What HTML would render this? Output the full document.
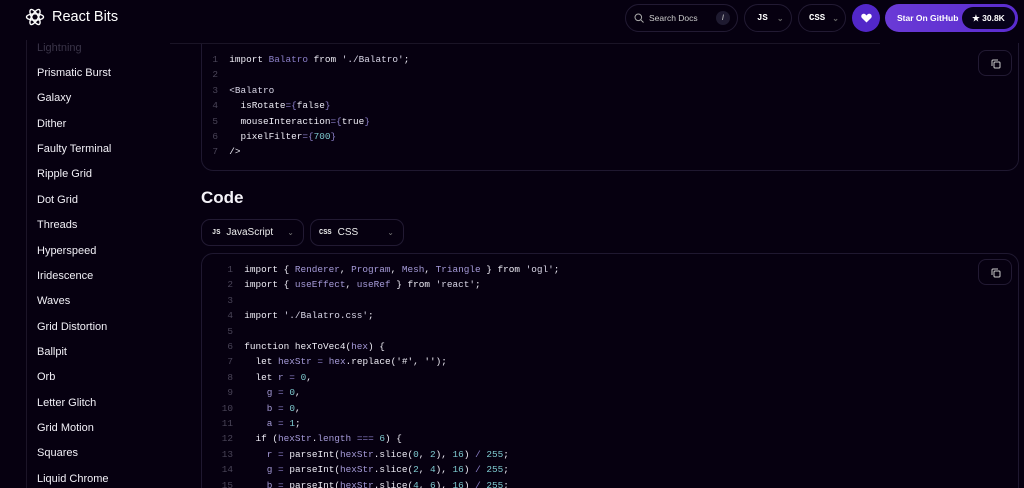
<!DOCTYPE html>
<html><head><meta charset="utf-8"><style>
*{margin:0;padding:0;box-sizing:border-box}
html,body{width:1024px;height:488px;overflow:hidden}
body{background:#060010;font-family:"Liberation Sans",sans-serif;color:#fff;position:relative}
.abs{position:absolute}
.side{left:26px;top:40px;width:140px;height:448px;border-left:1px solid #1c1528;overflow:hidden}
.side div{position:absolute;left:10px;font-size:11px;color:#f2f0f7;white-space:nowrap}
.pill{position:absolute;border:1px solid #221a33;border-radius:14px;height:28px;top:4px;display:flex;align-items:center;font-size:9px;font-weight:bold}
.block{border:1px solid #1f1830;border-radius:12px;background:#060010}
.code{font-family:"Liberation Mono",monospace;font-size:9.4px;line-height:15.4px;white-space:pre;color:#eeecf5;overflow:hidden}
.ln{color:#4a4458;display:inline-block;text-align:right}
.v{color:#a59ad8}.n{color:#7ecad0}.o{color:#8b7fc8}.c{color:#d8d5e6}
.copy{position:absolute;width:34px;height:26px;border:1px solid #221a33;border-radius:8px}
.dd{position:absolute;top:219px;height:27px;border:1px solid #221a33;border-radius:9px;font-size:10px;display:flex;align-items:center;color:#eee}
</style></head><body>
<div class="abs block" style="left:201px;top:20px;width:818px;height:151px"></div>
<div class="abs code" style="left:207px;top:52px"><span class="ln" style="width:11px">1</span>  import <span class="o">Balatro</span> from <span class="c">'./Balatro'</span>;
<span class="ln" style="width:11px">2</span>
<span class="ln" style="width:11px">3</span>  <span class="c">&lt;Balatro</span>
<span class="ln" style="width:11px">4</span>    isRotate<span class="o">={</span>false<span class="o">}</span>
<span class="ln" style="width:11px">5</span>    mouseInteraction<span class="o">={</span>true<span class="o">}</span>
<span class="ln" style="width:11px">6</span>    pixelFilter<span class="o">={</span><span class="n">700</span><span class="o">}</span>
<span class="ln" style="width:11px">7</span>  /&gt;</div>
<div class="copy" style="left:978px;top:50px"><svg class="abs" style="left:12px;top:8px" width="10" height="10" viewBox="0 0 10 10" fill="none" stroke="#ccc" stroke-width="1"><rect x="3" y="3" width="6" height="6" rx="1"/><path d="M1 7V2a1 1 0 0 1 1-1h5"/></svg></div>
<div class="abs" style="left:0;top:0;width:1024px;height:43px;background:#060010"></div>
<svg class="abs" style="left:25px;top:7px" width="20" height="20" viewBox="0 0 20 20" fill="none" stroke="#fff" stroke-width="1.4"><ellipse cx="10" cy="10" rx="8.5" ry="3.2"/><ellipse cx="10" cy="10" rx="8.5" ry="3.2" transform="rotate(60 10 10)"/><ellipse cx="10" cy="10" rx="8.5" ry="3.2" transform="rotate(120 10 10)"/></svg>
<div class="abs" style="left:52px;top:9px;font-size:14.5px;color:#fff">React Bits</div>
<div class="abs" style="left:170px;top:43px;width:710px;height:1px;background:#1a1426"></div>
<div class="pill" style="left:625px;width:113px;border-radius:14px"><svg style="margin-left:8px" width="10" height="10" viewBox="0 0 10 10" fill="none" stroke="#aaa" stroke-width="1"><circle cx="4.3" cy="4.3" r="3.3"/><path d="M6.8 6.8 9.5 9.5"/></svg><span style="margin-left:5px;font-weight:normal;color:#ccc;font-size:8.5px">Search Docs</span><span style="margin-left:auto;margin-right:7px;width:14px;height:14px;border-radius:7px;background:#1e1a30;font-size:7px;color:#bbb;display:flex;align-items:center;justify-content:center">/</span></div>
<div class="pill" style="left:744px;width:48px"><span style="margin-left:12px;font-family:'Liberation Mono',monospace">JS</span><span style="margin-left:9px;color:#666;font-size:8px">⌄</span></div>
<div class="pill" style="left:798px;width:48px"><span style="margin-left:10px;font-family:'Liberation Mono',monospace">CSS</span><span style="margin-left:7px;color:#666;font-size:8px">⌄</span></div>
<div class="abs" style="left:852px;top:4px;width:28px;height:28px;border-radius:14px;background:#5227c9;display:flex;align-items:center;justify-content:center"><svg width="11" height="10" viewBox="0 0 12 11"><path d="M6 10.5 1 5.5C-.5 4 .3 .8 3 .8 4.5.8 5.5 2 6 2.7 6.5 2 7.5.8 9 .8c2.7 0 3.5 3.2 2 4.7z" fill="#fff"/></svg></div>
<div class="abs" style="left:885px;top:4px;width:133px;height:28px;border-radius:14px;background:linear-gradient(90deg,#6a3ad6,#5a2ccf)"><span class="abs" style="left:12px;top:9px;font-size:8.5px;font-weight:bold">Star On GitHub</span><div class="abs" style="left:77px;top:3px;width:53px;height:22px;border-radius:11px;background:#07021a;font-size:8.5px;font-weight:bold;display:flex;align-items:center;justify-content:center">★ 30.8K</div></div>
<div class="abs side">
<div style="top:2px;color:#3a3448">Lightning</div>
<div style="top:27px">Prismatic Burst</div><div style="top:52px">Galaxy</div><div style="top:78px">Dither</div><div style="top:103px">Faulty Terminal</div><div style="top:128px">Ripple Grid</div><div style="top:154px">Dot Grid</div><div style="top:179px">Threads</div><div style="top:205px">Hyperspeed</div><div style="top:230px">Iridescence</div><div style="top:255px">Waves</div><div style="top:281px">Grid Distortion</div><div style="top:306px">Ballpit</div><div style="top:331px">Orb</div><div style="top:357px">Letter Glitch</div><div style="top:382px">Grid Motion</div><div style="top:407px">Squares</div><div style="top:433px">Liquid Chrome</div>
</div>
<div class="abs" style="left:201px;top:188px;font-size:17px;font-weight:bold;color:#f4f2f8">Code</div>
<div class="dd" style="left:201px;width:103px"><span style="margin-left:10px;font-family:'Liberation Mono',monospace;font-size:7px;font-weight:bold">JS</span><span style="margin-left:6px">JavaScript</span><span style="margin-left:auto;margin-right:9px;color:#777;font-size:8px">⌄</span></div>
<div class="dd" style="left:310px;width:94px"><span style="margin-left:8px;font-family:'Liberation Mono',monospace;font-size:7px;font-weight:bold">CSS</span><span style="margin-left:6px">CSS</span><span style="margin-left:auto;margin-right:9px;color:#777;font-size:8px">⌄</span></div>
<div class="abs block" style="left:201px;top:253px;width:818px;height:236px;border-bottom:none;border-radius:12px 12px 0 0"></div>
<div class="copy" style="left:978px;top:259px"><svg class="abs" style="left:12px;top:8px" width="10" height="10" viewBox="0 0 10 10" fill="none" stroke="#ccc" stroke-width="1"><rect x="3" y="3" width="6" height="6" rx="1"/><path d="M1 7V2a1 1 0 0 1 1-1h5"/></svg></div>
<div class="abs code" style="left:219px;top:262px;height:226px"><span class="ln" style="width:14px">1</span>  import { <span class="v">Renderer</span>, <span class="v">Program</span>, <span class="v">Mesh</span>, <span class="v">Triangle</span> } from <span class="c">'ogl'</span>;
<span class="ln" style="width:14px">2</span>  import { <span class="v">useEffect</span>, <span class="v">useRef</span> } from <span class="c">'react'</span>;
<span class="ln" style="width:14px">3</span>
<span class="ln" style="width:14px">4</span>  import <span class="c">'./Balatro.css'</span>;
<span class="ln" style="width:14px">5</span>
<span class="ln" style="width:14px">6</span>  function hexToVec4(<span class="v">hex</span>) {
<span class="ln" style="width:14px">7</span>    let <span class="v">hexStr</span> <span class="o">=</span> <span class="v">hex</span>.replace('#', '');
<span class="ln" style="width:14px">8</span>    let <span class="v">r</span> <span class="o">=</span> <span class="n">0</span>,
<span class="ln" style="width:14px">9</span>      <span class="v">g</span> <span class="o">=</span> <span class="n">0</span>,
<span class="ln" style="width:14px">10</span>      <span class="v">b</span> <span class="o">=</span> <span class="n">0</span>,
<span class="ln" style="width:14px">11</span>      <span class="v">a</span> <span class="o">=</span> <span class="n">1</span>;
<span class="ln" style="width:14px">12</span>    if (<span class="v">hexStr</span>.<span class="v">length</span> <span class="o">===</span> <span class="n">6</span>) {
<span class="ln" style="width:14px">13</span>      <span class="v">r</span> <span class="o">=</span> parseInt(<span class="v">hexStr</span>.slice(<span class="n">0</span>, <span class="n">2</span>), <span class="n">16</span>) <span class="o">/</span> <span class="n">255</span>;
<span class="ln" style="width:14px">14</span>      <span class="v">g</span> <span class="o">=</span> parseInt(<span class="v">hexStr</span>.slice(<span class="n">2</span>, <span class="n">4</span>), <span class="n">16</span>) <span class="o">/</span> <span class="n">255</span>;
<span class="ln" style="width:14px">15</span>      <span class="v">b</span> <span class="o">=</span> parseInt(<span class="v">hexStr</span>.slice(<span class="n">4</span>, <span class="n">6</span>), <span class="n">16</span>) <span class="o">/</span> <span class="n">255</span>;</div>
</body></html>
